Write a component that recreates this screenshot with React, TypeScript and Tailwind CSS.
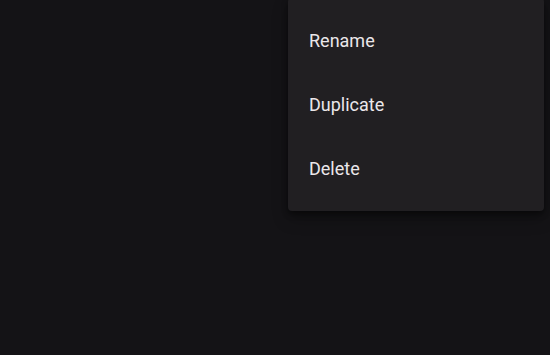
export default function App() {
  const items = ["Rename", "Duplicate", "Delete"];

  return (
    <main className="relative h-[355px] w-[550px] overflow-hidden bg-[#141316] font-['Roboto',sans-serif]">
      <div className="absolute left-[288px] top-[-2px] w-[256px] rounded-[4px] bg-[#211f22] pt-[10px] pb-[11px] shadow-[0_3px_6px_rgba(0,0,0,0.45),0_8px_16px_rgba(0,0,0,0.25)]">
        {items.map((item) => (
          <div key={item} className="flex h-16 items-center px-[21px] text-[18px] text-[#ebe7ea]">
            {item}
          </div>
        ))}
      </div>
    </main>
  );
}
